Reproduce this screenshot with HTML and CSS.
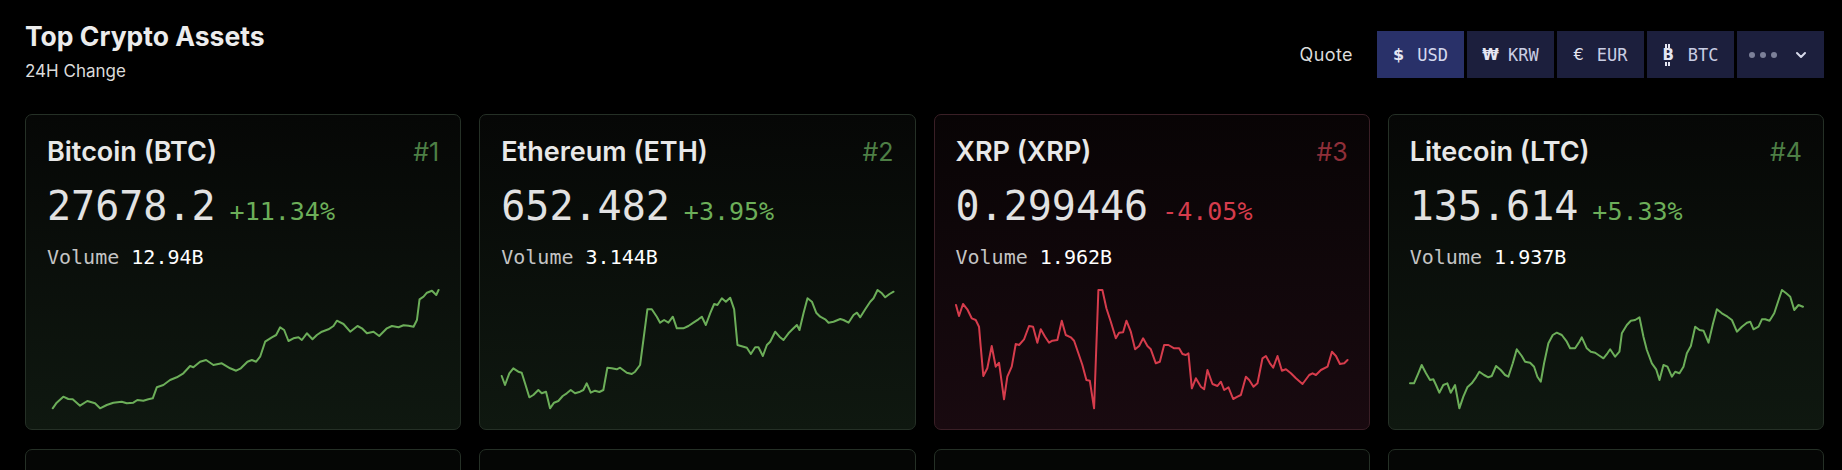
FILE: index.html
```html
<!DOCTYPE html>
<html>
<meta charset="UTF-8">

<head>
    <title>Top Crypto Assets</title>
    <link rel="stylesheet" href="styles.css">
</head>

<body>
    <div class="page">
        <div class="header">
            <div class="heading">
                <h1>Top Crypto Assets</h1>
                <p class="sub">24H Change</p>
            </div>
            <div class="quote">
                <span class="quote-label">Quote</span>
                <ul class="quote-list">
                    <li class="qbtn active"><span class="qicon bold">$</span>USD</li>
                    <li class="qbtn"><span class="qicon bold won">₩</span>KRW</li>
                    <li class="qbtn"><span class="qicon">€</span>EUR</li>
                    <li class="qbtn"><span class="qicon bold btc">B</span>BTC</li>
                    <li class="qbtn more">
                        <span class="dots"><i></i><i></i><i></i></span>
                        <svg class="chev" width="12" height="8" viewBox="0 0 12 8"><polyline points="2,2 6,6 10,2" fill="none" stroke="#d6d9ea" stroke-width="2" stroke-linecap="round" stroke-linejoin="round"/></svg>
                    </li>
                </ul>
            </div>
        </div>

        <div class="grid">
            <div class="card up">
                <div class="card-top"><span class="name">Bitcoin (BTC)</span><span class="rank">#1</span></div>
                <div class="price-row"><span class="price">27678.2</span><span class="change">+11.34%</span></div>
                <div class="volume">Volume <span>12.94B</span></div>
                <svg class="spark" viewBox="0 0 392 130" preserveAspectRatio="none">
                    <polyline points="5.7,124.3 9.7,118.7 16.3,112.7 21.3,115 25.7,115.3 33,121.7 40.3,117 48,119.3 53,124.3 59.7,121 66.3,118.7 74.7,117.7 79.7,119.3 86.3,118.7 90.3,116 96.3,116.7 101.3,115.3 105.7,114.3 109.7,103.3 116.3,101 123,96 129.7,93.3 136.3,89.3 143,82 146.3,83.3 153,77.7 159,76 166.3,81 174.7,79.3 183,84.3 189,86.7 193.7,84.3 200.3,77.7 204.7,76 209,77.7 213,72.7 218,57.7 224.7,53.3 229,51 233,43.3 237,46 241.3,57 246.3,54.3 251.3,53.3 254.7,56 259.7,49.3 265.3,55.3 269.7,51 274.7,47.7 281.3,45.3 286.3,42 289.7,36.7 296.3,40 303,47.7 310.3,42 314.7,44.3 319.7,49.3 326.3,47.7 332,52 339.7,44.3 344.7,42 351.3,43.3 356.3,41.3 361.3,41.7 366.3,42.7 369.7,36 372.3,15.3 376.3,12.7 379.7,8.7 384.7,6.7 389,11 391.3,6"/>
                </svg>
            </div>

            <div class="card up">
                <div class="card-top"><span class="name">Ethereum (ETH)</span><span class="rank">#2</span></div>
                <div class="price-row"><span class="price">652.482</span><span class="change">+3.95%</span></div>
                <div class="volume">Volume <span>3.144B</span></div>
                <svg class="spark" viewBox="0 0 392 130" preserveAspectRatio="none">
                    <polyline points="0.7,92 4,101 8.3,89.3 12.3,84.3 17.3,87.7 20.7,88.7 24,99.3 28.3,113.3 32.3,111 37.3,106 40.7,109.3 45,107.7 49,124.3 53,118.7 57.3,117 61.7,112 65.7,109.3 69.7,106 74,109.3 79,107.7 82.3,106 85.7,99.3 89.7,108.7 94,106.7 98.3,108 102.3,106 106.3,83.7 110.7,84.3 115.7,85.3 119,83.7 125.7,88.7 130.7,90 134,87.7 139,81 142.3,56 146.3,25.3 150.7,25.3 155.7,32.7 159,38.7 163,36 167.3,38.7 171.7,32.7 175.7,44.3 182.3,44.3 187.3,42 192.3,38.7 197.3,35.3 200.7,32.7 204.7,41 209,29.3 213,20 216.3,21 220.7,14.3 224.7,17.7 229,13.7 233,25.3 236.3,61 242.3,62.7 245.7,63.7 249.7,70 254,63.3 257.3,63.3 261.7,72 265.7,61 269,57.7 274,47.7 278.3,52.7 282.3,56 287.3,49.3 292.3,44.3 295.7,41 298.3,46 302.3,29.3 306.3,14.3 310.7,17.7 315,28.7 319,32.7 324,35.3 327.3,38.7 332.3,37.7 339,35 342.3,36 347.3,38.7 352.3,31 355.7,28.7 359,33.3 364,25.3 369,17.7 372.3,14.3 376.3,6 380.7,9.3 384,13.3 388.3,10 392.3,7.7"/>
                </svg>
            </div>

            <div class="card down">
                <div class="card-top"><span class="name">XRP (XRP)</span><span class="rank">#3</span></div>
                <div class="price-row"><span class="price">0.299446</span><span class="change">-4.05%</span></div>
                <div class="volume">Volume <span>1.962B</span></div>
                <svg class="spark" viewBox="0 0 392 130" preserveAspectRatio="none">
                    <polyline points="0,21 3,32 7,20 11.3,25.3 15.7,34.3 19.7,36 23,42.7 24.7,62.7 27.3,92 31.3,84.3 35.7,62 39.7,82.7 43,78.7 48,115.3 51.3,92.7 55.7,82.7 59.7,60 63,61 68,55.3 73,42 77,42.7 81.3,58.7 84.7,45.3 89,52.7 93,58.7 96.3,56.7 101.3,56 105.7,36.7 109.7,51 114.7,53.3 118,56.7 122.3,69.3 126.3,81 130.3,96 133.7,96.7 138,124.3 142.3,6 146.3,6 150.3,24.3 154.7,37.7 159.7,54.3 163,48.7 167,48.3 170.3,36.7 174.7,47.7 179,65.3 183,62 187,54.3 191.3,62 194.7,65.3 199.7,79.3 203.7,77.7 208,61 212.3,61 218,64.3 223,64.3 226.3,70 229.7,71 232.3,69.3 235.7,104.3 239.7,94.3 244.7,102.7 248,105.3 251.3,86 256.3,100 261.3,102 264.7,97.7 268,106 272.3,103.3 277,115 281.3,112.7 284.7,111 289.7,92.7 293,96 297.3,102.7 301.3,99.3 306.3,74.3 309.7,72 313.7,79.3 317,83.7 321.3,72 325.7,86.7 329.7,85.3 334.7,89.3 339.7,94.3 346.3,100 353,91 356.3,89.3 359.7,91 364.7,86 371.3,82.7 375.7,67.7 379.7,72 383.7,80 388,79.3 391.3,76"/>
                </svg>
            </div>

            <div class="card up">
                <div class="card-top"><span class="name">Litecoin (LTC)</span><span class="rank">#4</span></div>
                <div class="price-row"><span class="price">135.614</span><span class="change">+5.33%</span></div>
                <div class="volume">Volume <span>1.937B</span></div>
                <svg class="spark" viewBox="0 0 392 130" preserveAspectRatio="none">
                    <polyline points="0,99.3 4,99.3 8.3,89.3 11.7,81 16,89.3 20,96 23.3,95.3 26,101 29.3,108.7 33.3,101 37.3,99.3 40.7,108.7 45,101 49.3,124.3 53.3,112.7 57.3,103.3 61.7,99.3 66,93.3 69.3,87.7 74,91 78.3,93.3 81.7,92 86,82 90.7,86 95,91 98.3,92.7 102.7,79.3 106.7,65.3 111.7,72 115,77.7 120,78.7 124,82.7 127.3,92.7 130.7,97.7 134,79.3 138.3,59.3 142.7,51 146.7,48.7 151.7,51 156.7,57.7 160,64.3 165,64.3 169.3,57.7 171.7,53.3 176.7,64.3 180.7,67.7 185,68.7 188.3,71 193.3,74.3 197.3,69.3 200,65.3 205,72.7 209.3,67.7 211.7,49.3 216.7,41 220.7,36.7 225,36 229.3,33.3 233.3,52.7 236.7,66 241.7,79.3 246,85.3 249.3,96 253.3,81 257.3,82.7 261.7,92.7 265,87.7 269.3,89.3 273.3,82.7 276.7,69.3 280.7,62 285,42.7 289.3,46 293.3,46.7 298.3,58.7 302.7,40 306.7,25.3 311.7,29.3 317.3,32.7 321.7,36 326.7,47.7 331.7,42.7 336.7,38.7 340,37.7 343.3,45.3 348.3,42.7 351.7,35.3 355,35.3 359.3,36.7 364,29.3 367.3,19.3 371.7,6 376,9.3 380,12.7 384,26 388.3,21 392.7,22.7"/>
                </svg>
            </div>

            <!-- next row, only its top edge is in view -->
            <div class="card up placeholder"></div>
            <div class="card up placeholder"></div>
            <div class="card up placeholder"></div>
            <div class="card up placeholder"></div>
        </div>
    </div>
</body>
</html>
```

FILE: styles.css
```css
body {
    background-color: #000;
    margin: 0;
    padding: 0;
    color: #e6e6e6;
    font-family: Inter, "Noto Sans", sans-serif;
}

.page {
    padding: 20px 18px 0 25px;
}

/* header */

.header {
    display: flex;
    justify-content: space-between;
    align-items: flex-start;
    height: 94px;
}

.heading h1 {
    margin: 0;
    font-size: 26.5px;
    line-height: 32px;
    font-weight: 700;
    color: #ececec;
}

.heading .sub {
    margin: 9px 0 0 0;
    font-size: 17px;
    line-height: 20px;
    color: #dcdcdc;
}

.quote {
    display: flex;
    align-items: center;
    margin-top: 11px;
}

.quote-label {
    font-size: 18px;
    letter-spacing: 0.4px;
    color: #dcdcdc;
    margin-right: 24px;
}

.quote-list {
    list-style-type: none;
    margin: 0;
    padding: 0;
    display: flex;
    gap: 3px;
}

.qbtn {
    width: 87px;
    height: 47px;
    display: flex;
    align-items: center;
    justify-content: center;
    background-color: #1c1f3d;
    color: #c9cde3;
    font-family: "DejaVu Sans Mono", monospace;
    font-size: 17px;
}

.qbtn.active {
    background-color: #293169;
    color: #d4d8ee;
}

.qicon {
    display: inline-block;
    margin-right: 13px;
    font-family: "DejaVu Sans", sans-serif;
    font-size: 16px;
    color: #e4e6f2;
}

.qicon.bold {
    font-weight: 700;
}

.qicon.won {
    font-size: 15px;
    margin-right: 9px;
}

.qicon.btc {
    position: relative;
    font-size: 15px;
    margin-right: 14px;
}

.qicon.btc::before,
.qicon.btc::after {
    content: "";
    position: absolute;
    left: 3px;
    top: -2px;
    width: 2px;
    height: 22px;
    background: linear-gradient(#e4e6f2 0 4px, transparent 4px 18px, #e4e6f2 18px);
}

.qicon.btc::after {
    left: 6px;
}

.qbtn.more {
    justify-content: flex-end;
    gap: 18px;
    padding-right: 17px;
    box-sizing: border-box;
}

.dots {
    display: flex;
    gap: 5px;
}

.dots i {
    width: 6px;
    height: 6px;
    border-radius: 50%;
    background-color: #7c8099;
}

/* cards */

.grid {
    display: grid;
    grid-template-columns: repeat(4, 1fr);
    column-gap: 18px;
    row-gap: 19px;
}

.card {
    border: 1px solid #253026;
    border-radius: 7px;
    padding: 21px 21px 15px 21px;
    background: linear-gradient(180deg, #060706 0%, #0f1810 100%);
}

.card.placeholder {
    height: 60px;
    background: #050605;
}

.card.down {
    border-color: #3a1f26;
    background: linear-gradient(180deg, #080405 0%, #190a10 100%);
}

.card-top {
    display: flex;
    justify-content: space-between;
    align-items: baseline;
    line-height: 32px;
}

.name {
    font-size: 27px;
    font-weight: 600;
    color: #e8e8e8;
}

.rank {
    font-size: 25px;
    font-weight: 400;
    color: #4d7f45;
}

.down .rank {
    color: #8f2f39;
}

.price-row {
    margin-top: 18px;
    display: flex;
    align-items: baseline;
    font-family: "DejaVu Sans Mono", monospace;
    line-height: 40px;
}

.price {
    font-size: 40px;
    color: #e2e2e2;
}

.change {
    font-size: 25px;
    margin-left: 14px;
    color: #6cae59;
}

.down .change {
    color: #d63c4c;
}

.volume {
    margin-top: 13px;
    font-family: "DejaVu Sans Mono", monospace;
    font-size: 20px;
    line-height: 24px;
    color: #c4c4c4;
}

.volume span {
    color: #fff;
}

.spark {
    display: block;
    margin-top: 15px;
    width: 100%;
    height: 130px;
    overflow: visible;
}

.spark polyline {
    fill: none;
    stroke: #6cae59;
    stroke-width: 2;
    stroke-linejoin: round;
    stroke-linecap: round;
}

.down .spark polyline {
    stroke: #d63c4c;
}
```
